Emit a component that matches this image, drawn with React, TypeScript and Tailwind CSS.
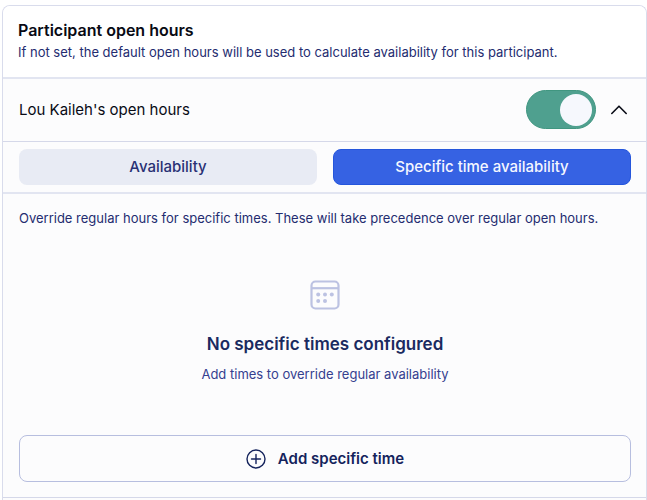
import { useState } from "react";

const tabs = ["Availability", "Specific time availability"];

function CalendarIcon() {
  return (
    <svg width="30" height="30" viewBox="0 0 30 30" fill="none" aria-hidden="true">
      <rect x="1.5" y="1.5" width="27" height="27" rx="4" stroke="#bcc2e2" strokeWidth="2.2" />
      <path d="M1.5 8.2H28.5" stroke="#bcc2e2" strokeWidth="2.2" />
      <g fill="#bcc2e2">
        <circle cx="8.2" cy="14.5" r="2" />
        <circle cx="15" cy="14.5" r="2" />
        <circle cx="21.8" cy="14.5" r="2" />
        <circle cx="8.2" cy="21" r="2" />
        <circle cx="15" cy="21" r="2" />
      </g>
    </svg>
  );
}

export default function App() {
  const [enabled, setEnabled] = useState(true);
  const [active, setActive] = useState(1);

  return (
    <main className="min-h-screen bg-white pt-[5px] pl-[2px] font-['Inter','Liberation_Sans',sans-serif]">
      <section className="min-h-[495px] overflow-hidden rounded-t-lg border border-b-0 border-[#d9dcec] bg-[#fcfcfd]">
        <header className="border-b-2 border-[#e2e5f1] bg-white px-[15px] pt-[13px] pb-[15px]">
          <h1 className="text-[16px] leading-[22px] font-semibold text-[#080a14]">Participant open hours</h1>
          <p className="mt-px text-[13px] leading-5 text-[#242c70]">
            If not set, the default open hours will be used to calculate availability for this participant.
          </p>
        </header>

        <div className="flex h-[63px] items-center border-b border-[#d5d8e9] pr-[17px] pb-px pl-4">
          <label htmlFor="open-hours" className="flex-1 text-[15px] leading-6 text-[#090b15]">
            Lou Kaileh's open hours
          </label>
          <span className="grid">
            <input
              id="open-hours"
              type="checkbox"
              role="switch"
              checked={enabled}
              onChange={() => setEnabled(!enabled)}
              className="peer col-start-1 row-start-1 h-[39px] w-[70px] cursor-pointer appearance-none rounded-full border border-[#409680] bg-[#4fa08f]"
            />
            <span className="pointer-events-none col-start-1 row-start-1 ml-1 size-8 self-center rounded-full bg-[#f6f8fd] peer-checked:ml-[34px]" />
          </span>
          <button type="button" aria-label="Collapse open hours" className="ml-[13px] flex size-5 items-center justify-center">
            <svg width="18" height="12" viewBox="0 0 18 12" fill="none" stroke="#0b0d18" strokeWidth="1.6" aria-hidden="true">
              <path d="M1.8 9.5L9 2.2L16.2 9.5" strokeLinecap="round" strokeLinejoin="round" />
            </svg>
          </button>
        </div>

        <div role="tablist" className="grid grid-cols-2 gap-4 border-b-2 border-[#e2e5f1] py-[7px] pr-[15px] pl-4">
          {tabs.map((tab, index) => (
            <button
              key={tab}
              type="button"
              role="tab"
              aria-selected={active === index}
              onClick={() => setActive(index)}
              className={
                "h-9 rounded-lg text-[15px] leading-5 font-medium " +
                (active === index ? "border border-[#2556dc] bg-[#3662e3] text-[#f5f7ff]" : "bg-[#e8ebf4] text-[#293174]")
              }
            >
              {tab}
            </button>
          ))}
        </div>

        <div className="border-b border-[#d5d8e9] pt-[14px] pr-[15px] pb-[15px] pl-4">
          <p className="text-[13px] leading-5 text-[#242c70]">
            Override regular hours for specific times. These will take precedence over regular open hours.
          </p>
          <div className="flex flex-col items-center pt-[52px] pb-[51px] text-center">
            <CalendarIcon />
            <h2 className="mt-[22px] text-[17px] leading-6 font-semibold text-[#1a2a60]">No specific times configured</h2>
            <p className="mt-2 text-[13px] leading-5 text-[#35408f]">Add times to override regular availability</p>
          </div>
          <button
            type="button"
            className="flex h-[47px] w-full items-center justify-center gap-3 rounded-lg border border-[#b7bedf] text-[15px] leading-6 font-semibold text-[#14235c]"
          >
            <svg width="20" height="20" viewBox="0 0 20 20" fill="none" stroke="#14235c" strokeWidth="1.4" aria-hidden="true">
              <circle cx="10" cy="10" r="9" />
              <path d="M10 5.5V14.5M5.5 10H14.5" strokeLinecap="round" />
            </svg>
            Add specific time
          </button>
        </div>
      </section>
    </main>
  );
}
